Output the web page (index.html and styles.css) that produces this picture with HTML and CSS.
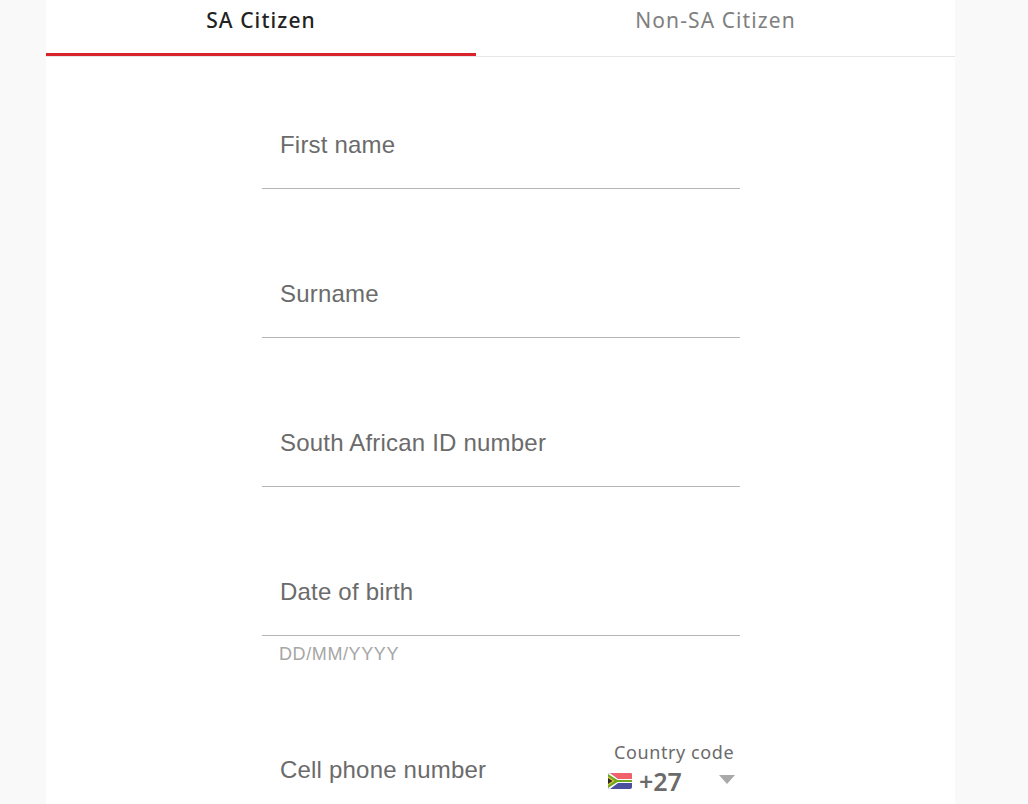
FILE: index.html
```html
<!DOCTYPE html>
<html lang="en">
  <head>
    <meta charset="UTF-8" />
    <title>Register</title>
    <link rel="stylesheet" href="styles.css">
  </head>
  <body>
    <div class="card">
      <div class="tabs">
        <div class="tab active">SA Citizen</div>
        <div class="tab">Non-SA Citizen</div>
      </div>
      <form class="form">
        <div class="field"><span class="label">First name</span></div>
        <div class="field"><span class="label">Surname</span></div>
        <div class="field"><span class="label">South African ID number</span></div>
        <div class="field">
          <span class="label">Date of birth</span>
          <span class="hint">DD/MM/YYYY</span>
        </div>
        <div class="field phone">
          <span class="label">Cell phone number</span>
          <div class="country">
            <span class="country-label">Country code</span>
            <div class="country-value">
              <svg class="flag" width="24" height="16" viewBox="0 0 24 16">
                <rect width="24" height="16" rx="2" fill="#4a4f9e" />
                <path d="M2 0h20a2 2 0 0 1 2 2v4H10z" fill="#f0616a" />
                <path d="M0 2a2 2 0 0 1 2-2l8 6h14v4H10l-8 6a2 2 0 0 1-2-2z" fill="#fff" />
                <path d="M0 1l9.500 6H24v2H9.500L0 15z" fill="#6fa820" />
                <path d="M0 3.500L6.500 8 0 12.500z" fill="#e8c53a" />
                <path d="M0 5l4.500 3L0 11z" fill="#2b2b2b" />
              </svg>
              <span class="code">+27</span>
              <span class="caret"></span>
            </div>
          </div>
        </div>
      </form>
    </div>
  </body>
</html>
```

FILE: styles.css
```css
* {
  margin: 0;
  padding: 0;
  box-sizing: border-box;
}
html,
body {
  height: 804px;
  overflow: hidden;
}
body {
  background-color: #f9f9f9;
  font-family: "Liberation Sans", Arial, sans-serif;
}
.card {
  width: 909px;
  height: 804px;
  margin-left: 46px;
  background-color: #fff;
}
.tabs {
  display: flex;
  height: 57px;
  border-bottom: 1px solid #e6e6e6;
}
.tab {
  flex: 479px 0 0;
  height: 56px;
  padding-top: 7px;
  text-align: center;
  font-family: "Noto Sans", sans-serif;
  font-size: 21px;
  line-height: 27px;
  letter-spacing: 1.1px;
  color: #808080;
}
.tab.active {
  flex: 430px 0 0;
  border-bottom: 3px solid #d9232a;
  font-weight: 500;
  color: #222;
}
.form {
  display: flex;
  flex-direction: column;
  gap: 58px;
  width: 478px;
  margin-left: 216px;
  padding-top: 41px;
}
.field {
  position: relative;
  height: 91px;
  padding: 32px 0 0 18px;
  border-bottom: 1px solid #b5b5b5;
}
.label {
  display: block;
  font-size: 24px;
  line-height: 30px;
  letter-spacing: 0.2px;
  color: #6b6b6b;
}
.hint {
  position: absolute;
  left: 17px;
  top: 99px;
  font-size: 18px;
  line-height: 21px;
  letter-spacing: 0.6px;
  color: #a6a6a6;
}
.phone {
  display: flex;
  justify-content: space-between;
  margin-top: 29px;
  border-bottom: none;
}
.country {
  display: flex;
  flex-direction: column;
  width: 133px;
  margin-top: -15px;
}
.country-label {
  padding-left: 7px;
  font-family: "Noto Sans", sans-serif;
  font-size: 18px;
  line-height: 24px;
  letter-spacing: 0.6px;
  color: #6b6b6b;
}
.country-value {
  display: flex;
  align-items: center;
  height: 31px;
  margin-top: 1px;
  padding-left: 1px;
}
.flag {
  flex: none;
}
.code {
  margin-left: 7px;
  padding-top: 2px;
  font-family: "Noto Sans", sans-serif;
  font-size: 25px;
  font-weight: 600;
  line-height: 31px;
  color: #6b6b6b;
}
.caret {
  width: 0;
  height: 0;
  margin: -3px 0 0 37px;
  border-left: 8px solid transparent;
  border-right: 8px solid transparent;
  border-top: 9px solid #a9a9a9;
}
```
